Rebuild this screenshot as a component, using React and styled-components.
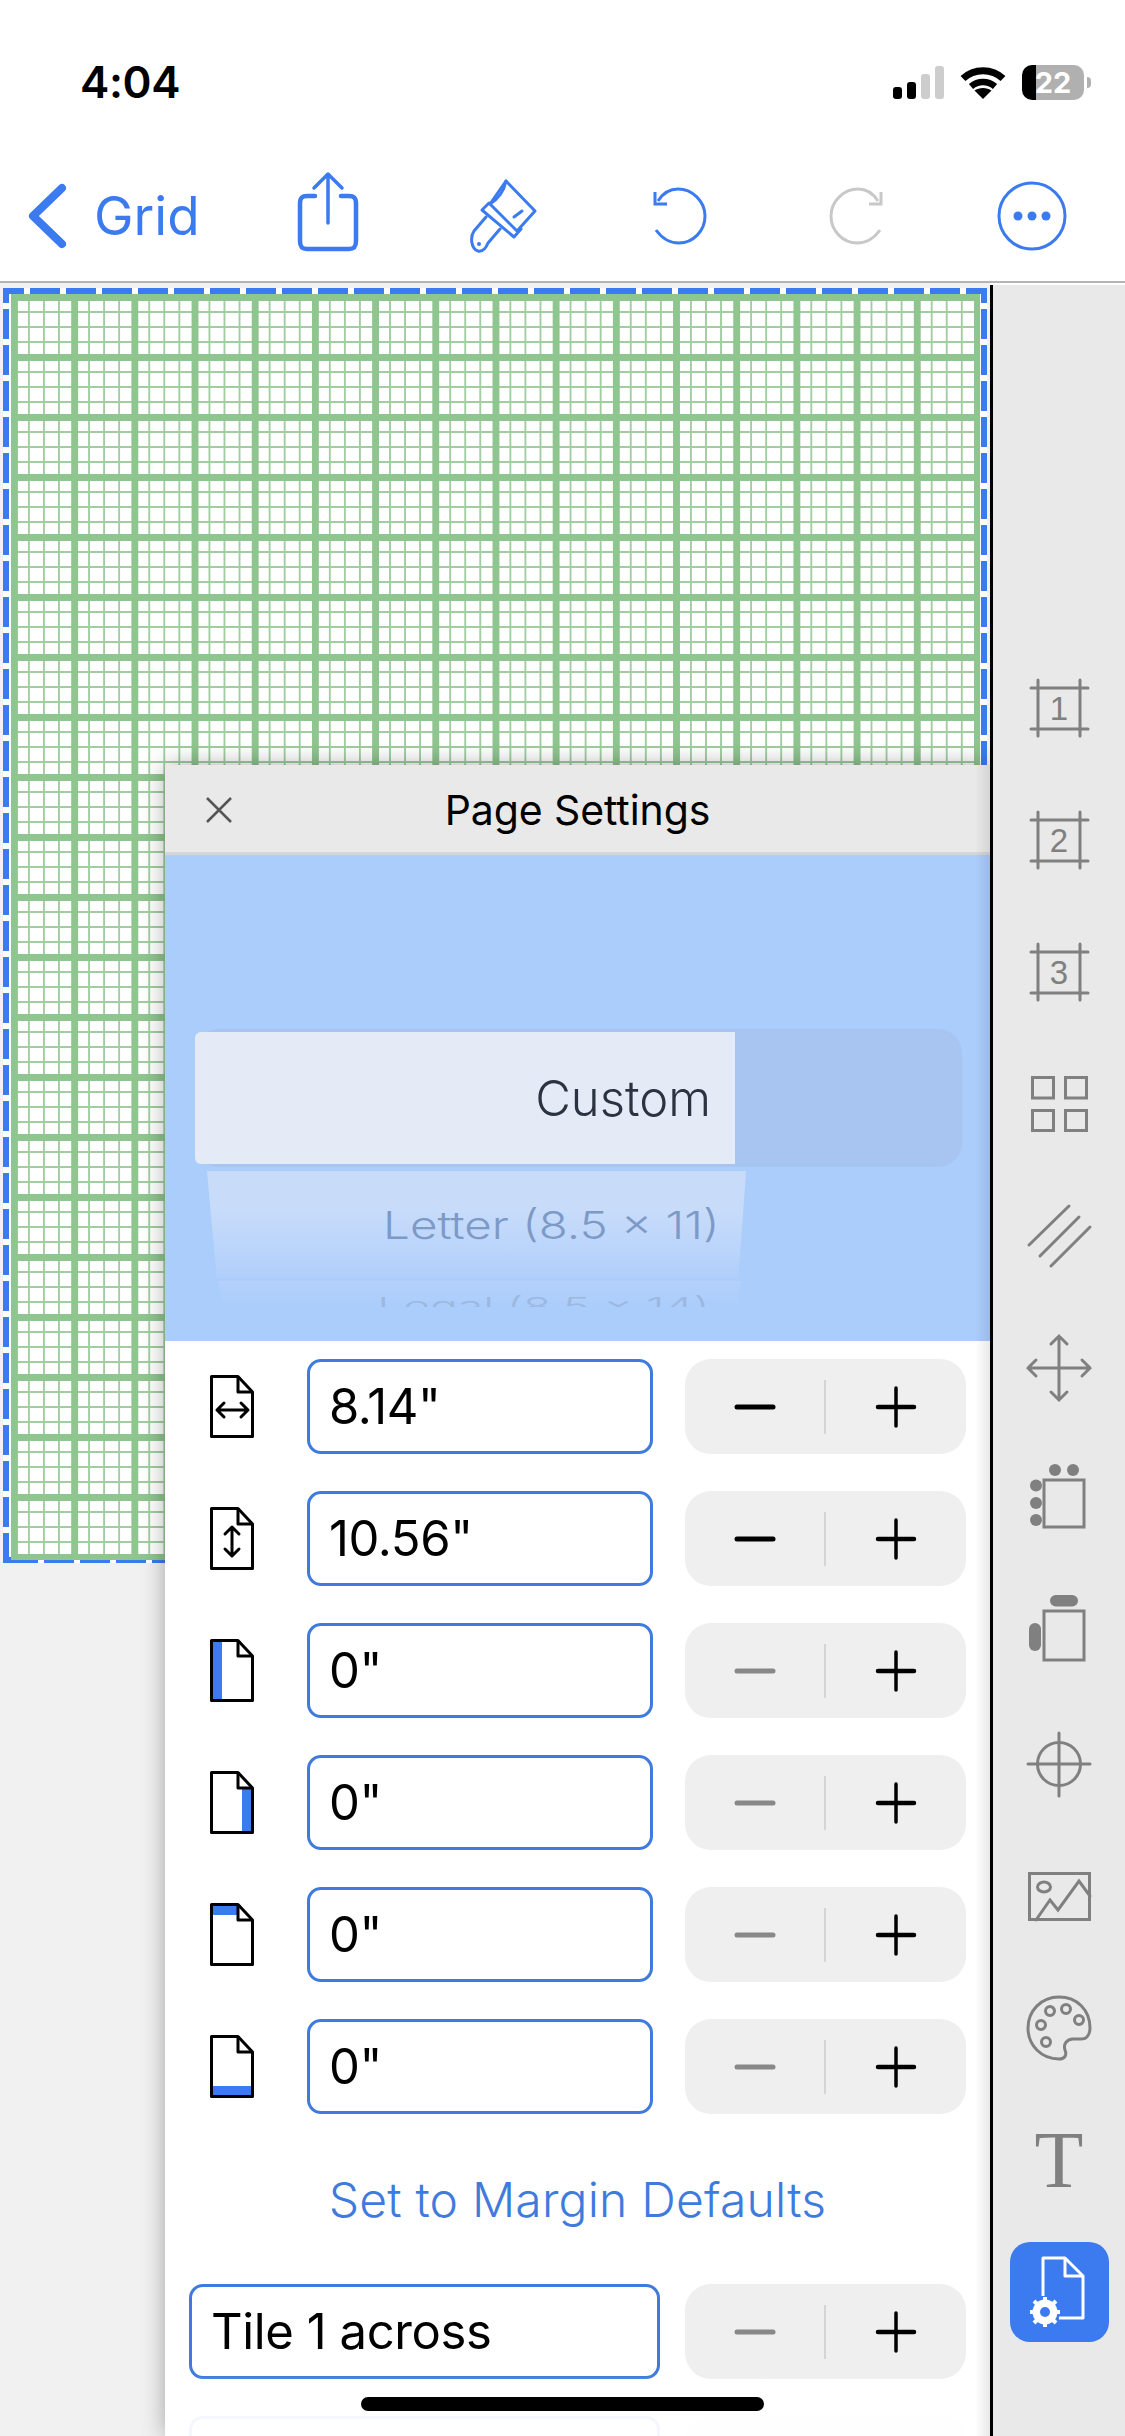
import React from 'react';
import styled, { createGlobalStyle } from 'styled-components';

const BLUE = '#3b7bef';
const LINE_BLUE = '#3f7bdc';
const GREEN = '#8fc58f';
const THIN = '#a0cea0';
const GRAY = '#808080';

const Global = createGlobalStyle`
  html, body { margin: 0; padding: 0; background: #fff; }
  * { box-sizing: border-box; }
`;

const Screen = styled.div`
  position: relative;
  width: 1125px;
  height: 2436px;
  overflow: hidden;
  display: flex;
  flex-direction: column;
  background: #fff;
  font-family: Inter, "Liberation Sans", sans-serif;
  color: #000;
`;

const StatusBar = styled.div`
  height: 150px;
  flex: none;
  display: flex;
  align-items: flex-start;
  padding: 57px 34px 0 80px;
`;
const Clock = styled.div`
  font-size: 44px;
  line-height: 50px;
  font-weight: 600;
  letter-spacing: -0.4px;
`;
const StatusIcons = styled.div`
  margin-left: auto;
  display: flex;
  align-items: center;
  gap: 16px;
  height: 50px;
`;
const Battery = styled.div`
  position: relative;
  width: 62px;
  height: 35px;
  border-radius: 10px;
  background: linear-gradient(90deg, #000 14px, #b0b0b0 14px);
  color: #fff;
  font-size: 29px;
  font-weight: 700;
  line-height: 35px;
  text-align: center;
  margin-right: 7px;
  &::after {
    content: '';
    position: absolute;
    right: -7px;
    top: 12px;
    width: 4px;
    height: 11px;
    border-radius: 0 4px 4px 0;
    background: #b0b0b0;
  }
`;

const Toolbar = styled.div`
  height: 133px;
  flex: none;
  display: flex;
  align-items: center;
  border-bottom: 2px solid #b4b4b4;
  padding: 0 0 0 27px;
`;
const Back = styled.div`
  width: 213px;
  display: flex;
  align-items: center;
  gap: 27px;
  color: ${BLUE};
  font-size: 53px;
  line-height: 64px;
`;
const ToolSlot = styled.div`
  width: 176px;
  flex: none;
  display: flex;
  justify-content: center;
  margin-top: ${(p) => p.$shift || 0}px;
`;

const Main = styled.div`
  flex: 1;
  display: flex;
  min-height: 0;
`;
const Canvas = styled.div`
  position: relative;
  width: 990px;
  flex: none;
  overflow: hidden;
  background: #f1f1f1;
  padding: 5px 0 0 3px;
`;
const Page = styled.div`
  width: 984px;
  height: 1275px;
  padding: 6px 0 0 8px;
  background-color: #fff;
  background-image:
    linear-gradient(90deg, ${BLUE} 30px, transparent 30px),
    linear-gradient(90deg, ${BLUE} 30px, transparent 30px),
    linear-gradient(180deg, ${BLUE} 30px, transparent 30px),
    linear-gradient(180deg, ${BLUE} 30px, transparent 30px);
  background-size: 36px 6px, 36px 6px, 6px 36px, 6px 36px;
  background-position: 27px 0, 5px 100%, 0 21px, 100% 21px;
  background-repeat: repeat-x, repeat-x, repeat-y, repeat-y;
`;
const GridPaper = styled.div`
  width: 969px;
  height: 1266px;
  background-image:
    linear-gradient(90deg, ${GREEN} 7px, transparent 7px),
    linear-gradient(180deg, ${GREEN} 7px, transparent 7px),
    linear-gradient(90deg, transparent 2px, ${THIN} 2px, ${THIN} 4px, transparent 4px),
    linear-gradient(180deg, transparent 2px, ${THIN} 2px, ${THIN} 4px, transparent 4px);
  background-size: 60.2px 100%, 100% 60px, 15.05px 100%, 100% 15px;
`;

const Sidebar = styled.div`
  flex: 1;
  background: #e9e9e9;
  border-left: 3px solid #000;
  margin-top: 2px;
  padding-top: 357px;
  display: flex;
  flex-direction: column;
`;
const SideSlot = styled.div`
  height: 132px;
  flex: none;
  display: flex;
  align-items: center;
  justify-content: center;
`;
const SerifT = styled.div`
  font-family: "Liberation Serif", serif;
  font-size: 80px;
  line-height: 80px;
  color: ${GRAY};
`;
const ActiveTool = styled.div`
  width: 99px;
  height: 100px;
  border-radius: 20px;
  background: ${BLUE};
  display: flex;
  align-items: center;
  justify-content: center;
`;

const Modal = styled.div`
  position: absolute;
  left: 165px;
  top: 482px;
  width: 825px;
  height: 1671px;
  background: #fff;
  box-shadow: 0 0 22px rgba(0, 0, 0, 0.32);
  &::after {
    content: '';
    position: absolute;
    top: 0;
    bottom: 0;
    right: 0;
    width: 15px;
    background: linear-gradient(90deg, rgba(0, 0, 0, 0), rgba(0, 0, 0, 0.09));
  }
`;
const ModalHeader = styled.div`
  height: 90px;
  background: #e9e9e9;
  border-bottom: 3px solid #d6d6d6;
  display: flex;
  align-items: center;
  justify-content: center;
  position: relative;
`;
const CloseButton = styled.svg`
  position: absolute;
  left: 41px;
  top: 32px;
`;
const ModalTitle = styled.div`
  font-size: 41px;
  line-height: 46px;
  margin-top: 3px;
  letter-spacing: -0.1px;
`;

const Picker = styled.div`
  height: 486px;
  background: #abcdfb;
  padding-top: 174px;
  overflow: hidden;
`;
const Track = styled.div`
  margin-left: 30px;
  width: 767px;
  height: 138px;
  border-radius: 24px;
  background: #a7c5f0;
  display: flex;
  align-items: center;
`;
const Selected = styled.div`
  width: 540px;
  height: 132px;
  background: #e4ebf6;
  border-radius: 6px 0 0 6px;
  display: flex;
  align-items: center;
  justify-content: flex-end;
  padding-right: 24px;
  font-size: 49px;
  font-weight: 300;
  color: #2b3342;
`;
const WheelRow = styled.div`
  margin-top: ${(p) => p.$top}px;
  margin-left: ${(p) => p.$left}px;
  width: ${(p) => p.$width}px;
  height: ${(p) => p.$height}px;
  clip-path: ${(p) => p.$clip};
  background: ${(p) => p.$bg};
  display: flex;
  align-items: center;
  justify-content: flex-end;
  padding-right: ${(p) => p.$right}px;
  overflow: hidden;
`;
const WheelText = styled.div`
  font-size: 44px;
  font-weight: 300;
  white-space: nowrap;
  color: ${(p) => p.$color};
  transform: ${(p) => p.$transform};
  transform-origin: right center;
`;

const Form = styled.div`
  padding-top: 18px;
  display: flex;
  flex-direction: column;
  gap: 37px;
`;
const Row = styled.div`
  display: flex;
  align-items: center;
  height: 95px;
  padding-left: ${(p) => p.$left || 0}px;
`;
const DocSlot = styled.div`
  width: 142px;
  padding-left: 45px;
  flex: none;
  display: flex;
`;
const Field = styled.div`
  width: ${(p) => p.$width}px;
  height: 95px;
  border: 3px solid ${LINE_BLUE};
  border-radius: 14px;
  display: flex;
  align-items: center;
  padding-left: 19px;
  font-size: 49px;
  letter-spacing: -0.4px;
`;
const Stepper = styled.div`
  margin-left: auto;
  margin-right: 24px;
  width: 281px;
  height: 95px;
  border-radius: 26px;
  background: #efefef;
  display: flex;
  align-items: center;
`;
const StepSide = styled.div`
  width: 139px;
  flex: none;
  display: flex;
  justify-content: center;
`;
const StepDivider = styled.div`
  width: 2px;
  height: 54px;
  flex: none;
  background: #d5d5d5;
`;
const MarginLink = styled.div`
  height: 96px;
  display: flex;
  align-items: center;
  justify-content: center;
  color: ${LINE_BLUE};
  font-size: 48px;
  font-weight: 300;
  letter-spacing: 0.2px;
`;
const BottomFade = styled.div`
  position: absolute;
  left: 0;
  right: 0;
  bottom: 0;
  height: 60px;
  background: linear-gradient(180deg, rgba(255, 255, 255, 0), rgba(255, 255, 255, 0.94) 60%);
`;
const HomeBar = styled.div`
  position: absolute;
  left: 361px;
  top: 2397px;
  width: 403px;
  height: 14px;
  border-radius: 7px;
  background: #000;
`;

const Minus = ({ off }) => (
  <svg width="42" height="6" viewBox="0 0 42 6">
    <path d="M3 3H39" stroke={off ? '#888' : '#000'} strokeWidth="5" strokeLinecap="round" />
  </svg>
);
const Plus = () => (
  <svg width="42" height="42" viewBox="0 0 42 42">
    <path d="M3 21H39" stroke="#000" strokeWidth="4.5" strokeLinecap="round" />
    <path d="M21 2V40" stroke="#000" strokeWidth="3.5" strokeLinecap="round" />
  </svg>
);
const StepperControl = ({ off }) => (
  <Stepper>
    <StepSide><Minus off={off} /></StepSide>
    <StepDivider />
    <StepSide><Plus /></StepSide>
  </Stepper>
);

const DocIcon = ({ kind }) => (
  <svg width="44" height="63" viewBox="0 0 44 63">
    {kind === 'left' && <rect x="3" y="3" width="9" height="57" fill={BLUE} />}
    {kind === 'right' && <rect x="32" y="17" width="9" height="43" fill={BLUE} />}
    {kind === 'top' && <rect x="3" y="3" width="24" height="9" fill={BLUE} />}
    {kind === 'bottom' && <rect x="3" y="51" width="38" height="9" fill={BLUE} />}
    <path d="M1.5 1.5H28L42.5 17V61.5H1.5Z" fill="none" stroke="#000" strokeWidth="3" strokeLinejoin="round" />
    <path d="M28 1.5V17H42.5" fill="none" stroke="#000" strokeWidth="3" strokeLinejoin="round" />
    {kind === 'width' && (
      <path d="M7 35H38M14 28L7 35L14 42M31 28L38 35L31 42" fill="none" stroke="#000" strokeWidth="3" strokeLinecap="round" strokeLinejoin="round" />
    )}
    {kind === 'height' && (
      <path d="M22 20V49M15 27L22 20L29 27M15 42L22 49L29 42" fill="none" stroke="#000" strokeWidth="3" strokeLinecap="round" strokeLinejoin="round" />
    )}
  </svg>
);

const Side = ({ children }) => (
  <SideSlot>
    <svg width="132" height="132" viewBox="-66 -66 132 132" fill="none" stroke={GRAY} strokeWidth="3" strokeLinecap="round">
      {children}
    </svg>
  </SideSlot>
);

const CropMark = ({ n }) => (
  <Side>
    <path d="M-21 -28V28M21 -28V28M-28 -20H29M-28 21H29" />
    <text x="0" y="12" textAnchor="middle" stroke="none" fill={GRAY} fontFamily="Liberation Sans" fontSize="33">{n}</text>
  </Side>
);

const rows = [
  { kind: 'width', value: '8.14"' },
  { kind: 'height', value: '10.56"' },
  { kind: 'left', value: '0"', off: true },
  { kind: 'right', value: '0"', off: true },
  { kind: 'top', value: '0"', off: true },
  { kind: 'bottom', value: '0"', off: true },
];

export default function App() {
  return (
    <Screen>
      <Global />
      <StatusBar>
        <Clock>4:04</Clock>
        <StatusIcons>
          <svg width="51" height="33" viewBox="0 0 51 33">
            <rect x="0" y="21" width="9" height="12" rx="3" fill="#000" />
            <rect x="14" y="16" width="9" height="17" rx="3" fill="#000" />
            <rect x="28" y="8" width="9" height="25" rx="3" fill="#cdcdcd" />
            <rect x="42" y="0" width="9" height="33" rx="3" fill="#cdcdcd" />
          </svg>
          <svg width="46" height="33" viewBox="0 0 46 33">
            <path d="M3 12.5C14 2 32 2 43 12.5" fill="none" stroke="#000" strokeWidth="7" />
            <path d="M11 20.5C18 14.5 28 14.5 35 20.5" fill="none" stroke="#000" strokeWidth="6.5" />
            <path d="M14.5 24.5C19 21 27 21 31.5 24.5L23 33Z" fill="#000" />
          </svg>
          <Battery>22</Battery>
        </StatusIcons>
      </StatusBar>
      <Toolbar>
        <Back>
          <svg width="40" height="66" viewBox="0 0 40 66">
            <path d="M35 5L6 33L35 61" fill="none" stroke={BLUE} strokeWidth="8" strokeLinecap="round" strokeLinejoin="round" />
          </svg>
          Grid
        </Back>
        <ToolSlot $shift={-8}>
          <svg width="62" height="82" viewBox="0 0 62 82" fill="none" stroke={BLUE} strokeWidth="4.5" strokeLinecap="round" strokeLinejoin="round">
            <path d="M18 25H10C5 25 3 27 3 32V70C3 76 5 78 10 78H52C57 78 59 76 59 70V32C59 27 57 25 52 25H44" />
            <path d="M31 3V52M17 17L31 3L45 17" strokeWidth="3.5" />
          </svg>
        </ToolSlot>
        <ToolSlot>
          <svg width="68" height="74" viewBox="0 0 68 74" fill="none" stroke={BLUE} strokeWidth="3" strokeLinejoin="round" strokeLinecap="round">
            <path d="M36 2L65 32L47 52L20 25Z" />
            <path d="M36 2C34 12 28 20 20 25" />
            <path d="M52 32L44 38" />
            <path d="M19 24L12 31L44 58L51 50" />
            <path d="M16 38L4 52C0 58 1 70 8 72C13 73 16 69 18 64L30 50" />
            <circle cx="9" cy="65" r="2" fill={BLUE} stroke="none" />
          </svg>
        </ToolSlot>
        <ToolSlot>
          <svg width="56" height="58" viewBox="0 0 56 58" fill="none" stroke={BLUE} strokeWidth="3">
            <path d="M6 14C11 6 18 2 26 2C40 2 53 14 53 29C53 44 41 56 27 56C17 56 9 50 4 43" />
            <path d="M3 5V17H15" />
          </svg>
        </ToolSlot>
        <ToolSlot>
          <svg width="56" height="58" viewBox="0 0 56 58" fill="none" stroke="#c8c8c8" strokeWidth="3">
            <path d="M50 14C45 6 38 2 30 2C16 2 3 14 3 29C3 44 15 56 29 56C39 56 47 50 52 43" />
            <path d="M53 5V17H41" />
          </svg>
        </ToolSlot>
        <ToolSlot>
          <svg width="70" height="70" viewBox="0 0 70 70">
            <circle cx="35" cy="35" r="33" fill="none" stroke={BLUE} strokeWidth="3" />
            <circle cx="21" cy="35" r="4.5" fill={BLUE} />
            <circle cx="35" cy="35" r="4.5" fill={BLUE} />
            <circle cx="49" cy="35" r="4.5" fill={BLUE} />
          </svg>
        </ToolSlot>
      </Toolbar>
      <Main>
        <Canvas>
          <Page>
            <GridPaper />
          </Page>
          <Modal>
            <ModalHeader>
              <CloseButton width="26" height="26" viewBox="0 0 26 26">
                <path d="M1 1L25 25M25 1L1 25" stroke="#555" strokeWidth="2.5" />
              </CloseButton>
              <ModalTitle>Page Settings</ModalTitle>
            </ModalHeader>
            <Picker>
              <Track>
                <Selected>Custom</Selected>
              </Track>
              <WheelRow
                $top={4} $left={42} $width={539} $height={107} $right={27}
                $clip="polygon(0 0, 100% 0, 98.6% 100%, 1.8% 100%)"
                $bg="linear-gradient(180deg, #c8dcfa 35%, #b1cffb 100%)"
              >
                <WheelText $color="#7d9ac6" $transform="scale(1.08, 0.88)">Letter (8.5 x 11)</WheelText>
              </WheelRow>
              <WheelRow
                $top={3} $left={53} $width={523} $height={26} $right={31}
                $clip="polygon(0 0, 100% 0, 99% 100%, 1% 100%)"
                $bg="linear-gradient(180deg, #b4d0fb, #abcdfb)"
              >
                <WheelText $color="#9db8e0" $transform="translateY(12px) scale(1.05, 0.55)">Legal (8.5 x 14)</WheelText>
              </WheelRow>
            </Picker>
            <Form>
              {rows.map((row) => (
                <Row key={row.kind}>
                  <DocSlot><DocIcon kind={row.kind} /></DocSlot>
                  <Field $width={346}>{row.value}</Field>
                  <StepperControl off={row.off} />
                </Row>
              ))}
              <MarginLink>Set to Margin Defaults</MarginLink>
              <Row $left={24}>
                <Field $width={471}>Tile 1 across</Field>
                <StepperControl off />
              </Row>
              <Row $left={24}>
                <Field $width={471} />
                <StepperControl off />
              </Row>
            </Form>
            <BottomFade />
          </Modal>
        </Canvas>
        <Sidebar>
          <CropMark n="1" />
          <CropMark n="2" />
          <CropMark n="3" />
          <Side>
            <rect x="-26.5" y="-26.5" width="21" height="20.5" />
            <rect x="6.5" y="-26.5" width="21" height="20.5" />
            <rect x="-26.5" y="6.5" width="21" height="20" />
            <rect x="6.5" y="6.5" width="21" height="20" />
          </Side>
          <Side>
            <path d="M-30 9L10 -30M-19 20L20 -19M-8 30L31 -9" />
          </Side>
          <Side>
            <path d="M-31 0H31M0 -32V32M-23 -8L-31 0L-23 8M23 -8L31 0L23 8M-8 -24L0 -32L8 -24M-8 24L0 32L8 24" />
          </Side>
          <Side>
            <rect x="-15" y="-20" width="40" height="47" />
            <g fill={GRAY} stroke="none">
              <circle cx="-4" cy="-30" r="6" />
              <circle cx="14" cy="-30" r="6" />
              <circle cx="-23" cy="-14.5" r="6" />
              <circle cx="-23" cy="3" r="6" />
              <circle cx="-23" cy="20" r="6" />
            </g>
          </Side>
          <Side>
            <rect x="-15" y="-21" width="40" height="49" />
            <g fill={GRAY} stroke="none">
              <rect x="-9" y="-37" width="28" height="11.5" rx="5.7" />
              <rect x="-30" y="-9" width="12" height="28" rx="6" />
            </g>
          </Side>
          <Side>
            <circle cx="0" cy="0" r="21.5" />
            <path d="M-31 0H31M0 -31V32" />
          </Side>
          <Side>
            <rect x="-29.5" y="-22.5" width="60" height="46" strokeLinecap="butt" />
            <ellipse cx="-15" cy="-9" rx="6.5" ry="5" />
            <path d="M-23 24L-9 4L-1 14L20 -15L31 0" />
          </Side>
          <Side>
            <path d="M0 -31C-18 -31 -31 -17 -31 0C-31 18 -17 31 0 31C6 31 8 27 6 22C4 16 8 11 14 11H22C28 11 31 6 31 0C31 -18 18 -31 0 -31Z" />
            <circle cx="-18" cy="-3" r="4.5" />
            <circle cx="-9" cy="-17" r="4.5" />
            <circle cx="7" cy="-19" r="4.5" />
            <circle cx="20" cy="-8" r="4.5" />
            <circle cx="-13" cy="14" r="4.5" />
          </Side>
          <SideSlot><SerifT>T</SerifT></SideSlot>
          <SideSlot>
            <ActiveTool>
              <svg width="60" height="72" viewBox="0 0 60 72" fill="none" stroke="#fff" strokeWidth="3">
                <path d="M14 40V2H36L54 20V62H30" strokeLinejoin="round" />
                <path d="M36 2V20H54" strokeLinejoin="round" />
                <circle cx="16" cy="56" r="8.5" strokeWidth="8" />
                <path d="M16 41V71M1 56H31M5 45L27 67M27 45L5 67" strokeWidth="4" />
                <circle cx="16" cy="56" r="5" fill={BLUE} stroke="none" />
              </svg>
            </ActiveTool>
          </SideSlot>
        </Sidebar>
      </Main>
      <HomeBar />
    </Screen>
  );
}
